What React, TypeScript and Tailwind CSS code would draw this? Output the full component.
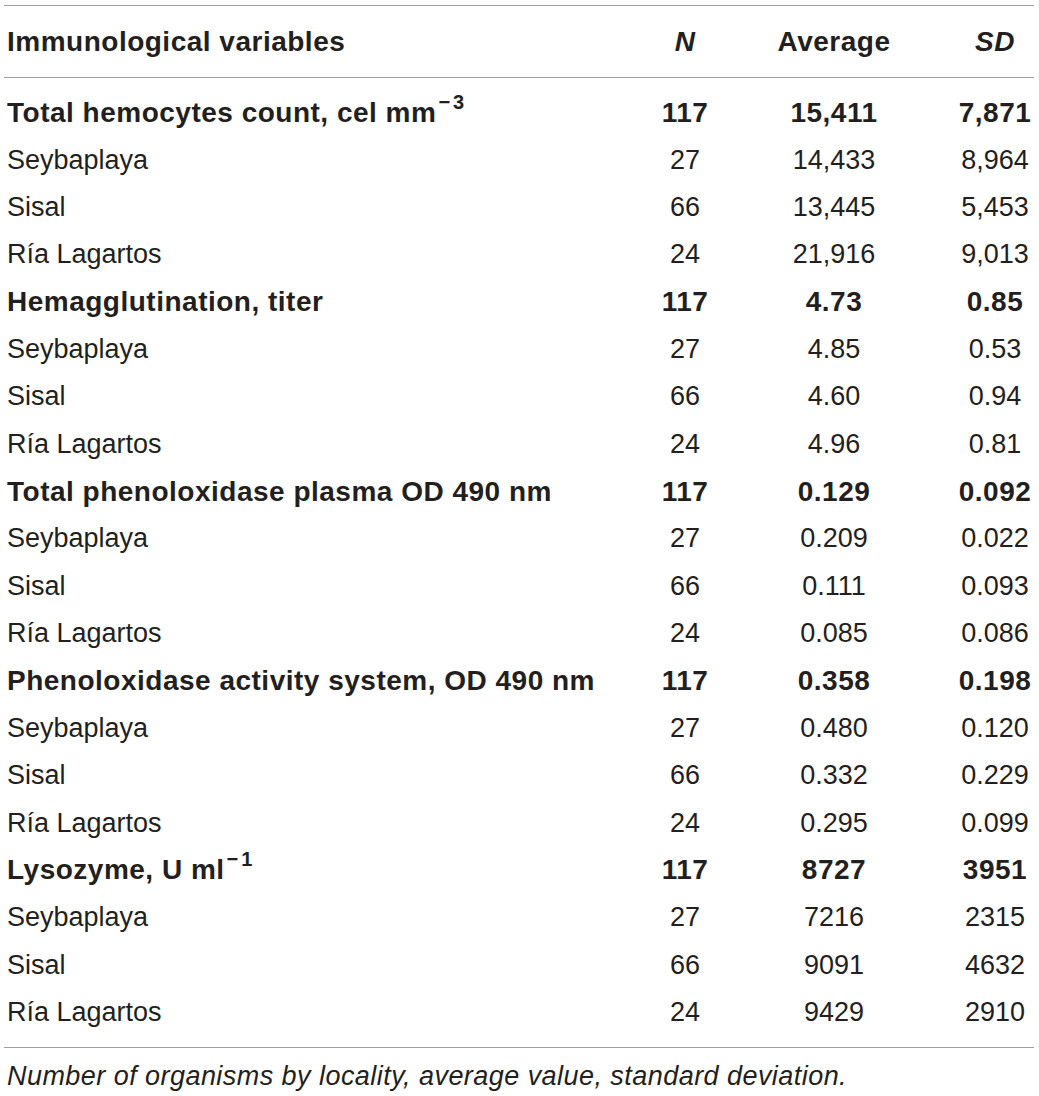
const groups = [
  {
    label: "Total hemocytes count, cel mm",
    sup: "−3",
    total: ["117", "15,411", "7,871"],
    rows: [
      ["Seybaplaya", "27", "14,433", "8,964"],
      ["Sisal", "66", "13,445", "5,453"],
      ["Ría Lagartos", "24", "21,916", "9,013"],
    ],
  },
  {
    label: "Hemagglutination, titer",
    total: ["117", "4.73", "0.85"],
    rows: [
      ["Seybaplaya", "27", "4.85", "0.53"],
      ["Sisal", "66", "4.60", "0.94"],
      ["Ría Lagartos", "24", "4.96", "0.81"],
    ],
  },
  {
    label: "Total phenoloxidase plasma OD 490 nm",
    total: ["117", "0.129", "0.092"],
    rows: [
      ["Seybaplaya", "27", "0.209", "0.022"],
      ["Sisal", "66", "0.111", "0.093"],
      ["Ría Lagartos", "24", "0.085", "0.086"],
    ],
  },
  {
    label: "Phenoloxidase activity system, OD 490 nm",
    total: ["117", "0.358", "0.198"],
    rows: [
      ["Seybaplaya", "27", "0.480", "0.120"],
      ["Sisal", "66", "0.332", "0.229"],
      ["Ría Lagartos", "24", "0.295", "0.099"],
    ],
  },
  {
    label: "Lysozyme, U ml",
    sup: "−1",
    total: ["117", "8727", "3951"],
    rows: [
      ["Seybaplaya", "27", "7216", "2315"],
      ["Sisal", "66", "9091", "4632"],
      ["Ría Lagartos", "24", "9429", "2910"],
    ],
  },
]

const Fila = ({ bold, label, sup, valores }) => {
  return (
    <div
      className={
        "grid grid-cols-[630px_102px_196px_100px] h-[47.37px] items-center " +
        (bold ? "font-bold text-[28px] tracking-[0.5px]" : "text-[27px]")
      }
    >
      <div className="pl-[3px] whitespace-nowrap">
        {label}
        {sup && <sup className="text-[20px] relative top-[-13px] ml-[2px] tracking-[3px]">{sup}</sup>}
      </div>
      <div className="text-center">{valores[0]}</div>
      <div className="text-center">{valores[1]}</div>
      <div className="text-center pl-[26px]">{valores[2]}</div>
    </div>
  )
}

export default function App() {
  return (
    <div className="w-[1039px] h-[1096px] bg-white text-[#231f20] pt-[5px] pl-[4px] font-['Liberation_Sans',Arial,sans-serif] leading-none">
      <div className="w-[1030px]">
        <div className="border-t border-b border-[#9d9d9d] h-[73px] grid grid-cols-[630px_102px_196px_100px] items-center font-bold text-[28px] tracking-[0.5px]">
          <div className="pl-[3px]">Immunological variables</div>
          <div className="text-center italic">N</div>
          <div className="text-center">Average</div>
          <div className="text-center pl-[26px] italic">SD</div>
        </div>
        <div className="py-[11px] border-b border-[#9d9d9d]">
          {groups.map((g) => (
            <div key={g.label}>
              <Fila bold label={g.label} sup={g.sup} valores={g.total} />
              {g.rows.map((r) => (
                <Fila key={g.label + r[0]} label={r[0]} valores={r.slice(1)} />
              ))}
            </div>
          ))}
        </div>
        <div className="pl-[3px] pt-[15px] italic text-[27px] tracking-[0.45px]">
          Number of organisms by locality, average value, standard deviation.
        </div>
      </div>
    </div>
  )
}
